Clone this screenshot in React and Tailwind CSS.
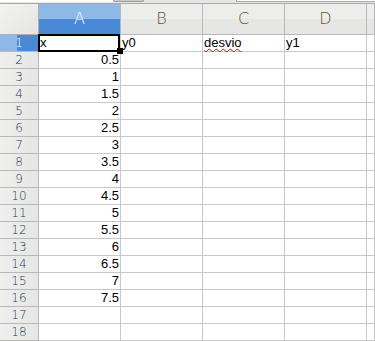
import React from 'react';

const cols = ['A', 'B', 'C', 'D', ''];
const colA = ['x', '0.5', '1', '1.5', '2', '2.5', '3', '3.5', '4', '4.5', '5', '5.5', '6', '6.5', '7', '7.5', '', ''];

const Cell = ({ children, right, selected, wavy }) => (
  <div className={`relative h-[17px] border-r border-b border-[#c8c8c8] bg-white text-[13px] leading-[15px] text-black px-[1px] overflow-visible whitespace-nowrap ${right ? 'text-right' : ''}`}>
    {wavy ? <span className="underline decoration-wavy decoration-[#e00] decoration-1 underline-offset-1">{children}</span> : children}
    {selected && (
      <>
        <div className="absolute -left-px -top-px w-[calc(100%+1px)] h-[18px] border-2 border-black pointer-events-none" />
        <div className="absolute -right-[3px] bottom-[-3px] w-[6px] h-[6px] bg-black z-10" />
      </>
    )}
  </div>
);

export default function App() {
  return (
    <div className="w-[375px] h-[341px] overflow-hidden bg-white font-['Liberation_Sans',Arial,sans-serif]">
      {/* strip from the formula bar above */}
      <div className="flex h-[4px] bg-[#e6e6e6] border-b border-[#a9a9a9]">
        <div className="w-[113px] h-[2px] bg-white" />
        <div className="w-[31px] h-[2px] bg-[#c9c9c9] border-x border-b border-[#9c9c9c] rounded-b-sm" />
        <div className="w-[92px]" />
        <div className="flex-1 h-[2px] bg-white border-l border-b border-[#a9a9a9]" />
      </div>

      <div className="grid grid-cols-[39px_82px_82px_82px_82px_1fr]">
        {/* corner */}
        <div className="h-[31px] border-r border-b border-[#b0b0b0] bg-gradient-to-br from-[#f2f2f0] via-[#ececea] to-[#e4e4e2]" />
        {cols.map((c, i) => (
          <div
            key={i}
            className={`h-[31px] flex items-center justify-center border-r border-b border-[#b8b8b8] text-[16px] font-extralight font-['DejaVu_Sans',sans-serif] ${
              i === 0
                ? 'bg-gradient-to-b from-[#8db8e8] from-50% to-[#4a89d6] to-50% text-white'
                : 'bg-gradient-to-b from-[#ededeb] from-50% to-[#e6e6e4] to-50% text-[#6a5030]'
            }`}
          >
            {c}
          </div>
        ))}

        {colA.map((v, r) => (
          <React.Fragment key={r}>
            <div
              className={`h-[17px] flex items-center justify-center border-r border-b border-[#b8b8b8] text-[12px] font-extralight font-['DejaVu_Sans',sans-serif] ${
                r === 0
                  ? 'bg-gradient-to-r from-[#8db8e8] from-45% to-[#4a89d6] to-45% text-white'
                  : 'bg-gradient-to-r from-[#efefed] to-[#e6e6e4] text-[#23385e]'
              }`}
            >
              {r + 1}
            </div>
            <Cell right={r > 0} selected={r === 0}>{v}</Cell>
            <Cell>{r === 0 ? 'y0' : ''}</Cell>
            <Cell wavy={r === 0}>{r === 0 ? 'desvio' : ''}</Cell>
            <Cell>{r === 0 ? 'y1' : ''}</Cell>
            <Cell />
          </React.Fragment>
        ))}
      </div>
    </div>
  );
}
